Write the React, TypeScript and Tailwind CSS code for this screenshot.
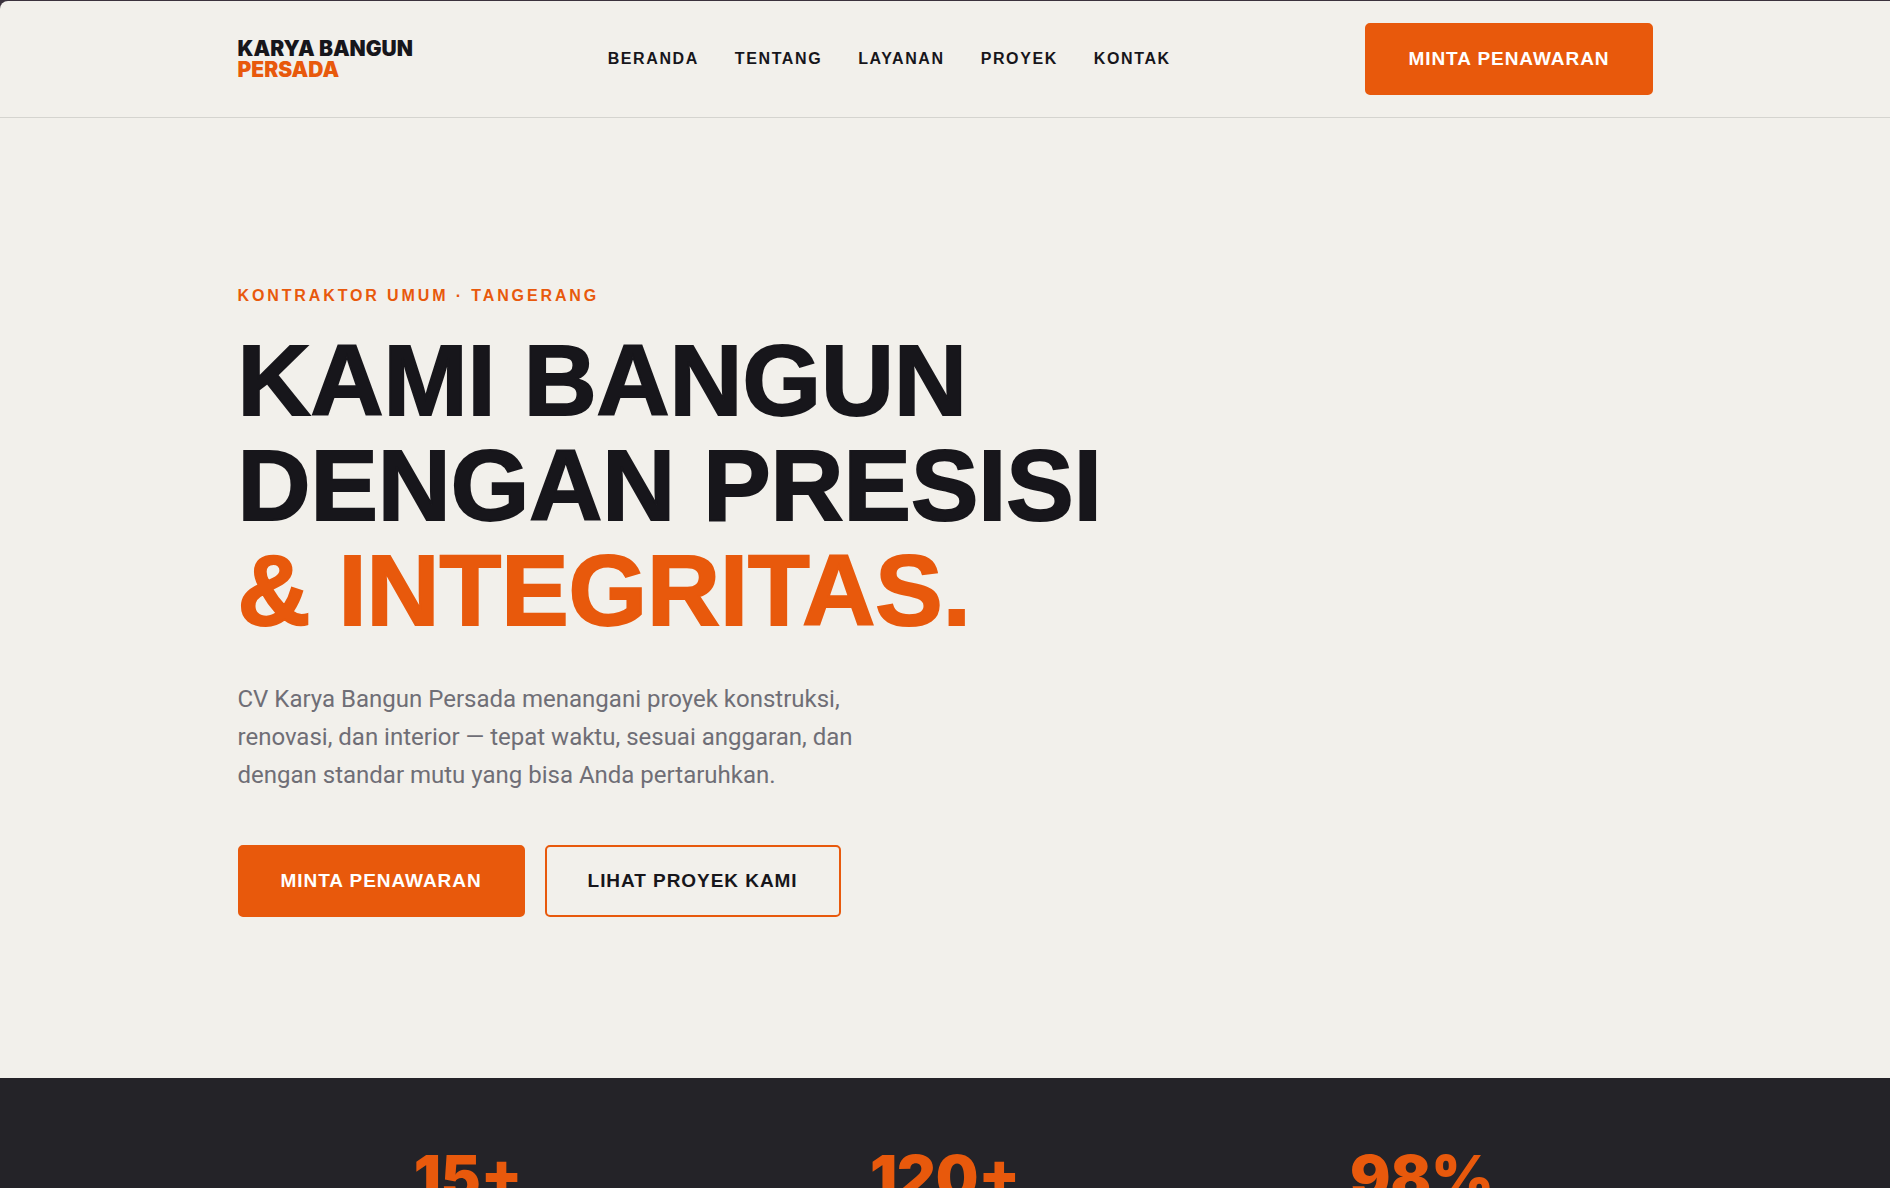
import clsx from 'clsx';

const navLinks = [
  { label: 'Beranda', href: '#beranda' },
  { label: 'Tentang', href: '#tentang' },
  { label: 'Layanan', href: '#layanan' },
  { label: 'Proyek', href: '#proyek' },
  { label: 'Kontak', href: '#kontak' },
];

const stats = ['15+', '120+', '98%'];

interface ButtonLinkProps {
  href: string;
  variant?: 'solid' | 'outline';
  children: string;
}

const ButtonLink = ({ href, variant = 'solid', children }: ButtonLinkProps) => (
  <a
    href={href}
    className={clsx(
      'inline-flex h-[72px] items-center justify-center rounded-[5px] border-2 border-[#e8590c] px-[41px] text-[19px] font-bold uppercase tracking-wider whitespace-nowrap',
      variant === 'solid' ? 'bg-[#e8590c] text-white' : 'text-[#17161b]'
    )}
  >
    {children}
  </a>
);

const Header = () => (
  <header className="rounded-tl-lg border-b border-[#d5d4cf] bg-[#f2f0eb]">
    <div className="mx-auto flex max-w-[1463px] items-center justify-between px-6 py-[22px]">
      <a href="#beranda" className="font-[Inter,sans-serif] text-[21px] leading-[21px] font-black uppercase">
        Karya Bangun
        <span className="block text-[#e8590c]">Persada</span>
      </a>
      <nav className="flex gap-9">
        {navLinks.map((link) => (
          <a key={link.href} href={link.href} className="text-base font-bold tracking-widest uppercase">
            {link.label}
          </a>
        ))}
      </nav>
      <ButtonLink href="#kontak">Minta Penawaran</ButtonLink>
    </div>
  </header>
);

const Hero = () => (
  <section id="beranda" className="bg-[#f2f0eb] pt-[166px] pb-[161px]">
    <div className="mx-auto max-w-[1463px] px-6">
      <p className="text-base leading-6 font-bold tracking-[0.18em] text-[#e8590c] uppercase">
        Kontraktor Umum · Tangerang
      </p>
      <h1 className="mt-5 text-[101px] leading-[105px] font-bold uppercase [-webkit-text-stroke:2px]">
        Kami Bangun
        <br />
        Dengan Presisi
        <br />
        <span className="text-[#e8590c]">& Integritas.</span>
      </h1>
      <p className="mt-[37px] max-w-[660px] font-[Roboto,sans-serif] text-2xl leading-[38px] text-[#6f6e76]">
        CV Karya Bangun Persada menangani proyek konstruksi, renovasi, dan interior — tepat waktu, sesuai anggaran, dan
        dengan standar mutu yang bisa Anda pertaruhkan.
      </p>
      <div className="mt-[51px] flex gap-5">
        <ButtonLink href="#kontak">Minta Penawaran</ButtonLink>
        <ButtonLink href="#proyek" variant="outline">
          Lihat Proyek Kami
        </ButtonLink>
      </div>
    </div>
  </section>
);

const Stats = () => (
  <section className="flex-1 bg-[#242328] pt-[69px]">
    <div className="mx-auto grid max-w-[1463px] grid-cols-3 gap-4 px-6 text-center">
      {stats.map((value) => (
        <p key={value} className="font-[Inter,sans-serif] text-6xl leading-[60px] font-black text-[#e8590c]">
          {value}
        </p>
      ))}
    </div>
  </section>
);

const App = () => (
  <div className="flex h-screen flex-col overflow-hidden bg-[#3b323d] pt-px font-['Liberation_Sans',sans-serif] text-[#17161b]">
    <Header />
    <Hero />
    <Stats />
  </div>
);

export default App;
